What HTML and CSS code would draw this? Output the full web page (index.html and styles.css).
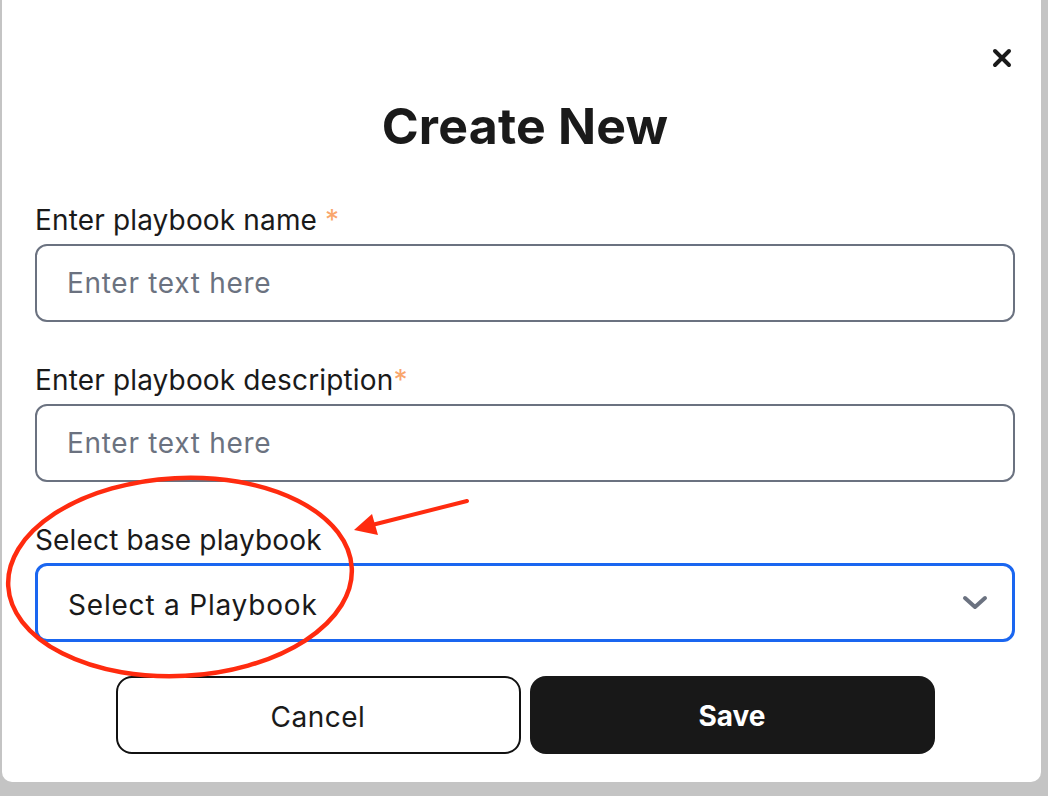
FILE: index.html
```html
<!DOCTYPE html>
<html lang="en">

<head>
    <meta charset="UTF-8">
    <meta name="viewport" content="width=device-width, initial-scale=1.0">
    <title>Create New</title>

    <link rel="stylesheet" href="styles.css">

</head>

<body>

    <div class="modal">
        <button class="fechar" aria-label="Close">
            <svg width="20" height="20" viewBox="0 0 20 20">
                <path d="M3 3 L17 17 M17 3 L3 17" stroke="#1a1a1a" stroke-width="4" stroke-linecap="round" fill="none"/>
            </svg>
        </button>

        <h2 class="titulo">Create New</h2>

        <div class="campos">
            <div class="campo">
                <label class="rotulo">Enter playbook name <span class="obrigatorio">*</span></label>
                <input class="entrada" type="text" placeholder="Enter text here">
            </div>
            <div class="campo">
                <label class="rotulo">Enter playbook description<span class="obrigatorio">*</span></label>
                <input class="entrada" type="text" placeholder="Enter text here">
            </div>
            <div class="campo">
                <label class="rotulo">Select base playbook</label>
                <div class="selecao">
                    <span>Select a Playbook</span>
                    <svg width="26" height="16" viewBox="0 0 26 16">
                        <path d="M3 3 L13 12 L23 3" stroke="#6b7280" stroke-width="4" stroke-linecap="round" stroke-linejoin="round" fill="none"/>
                    </svg>
                </div>
            </div>
        </div>

        <div class="botoes">
            <button class="btn btnCancelar">Cancel</button>
            <button class="btn btnSalvar">Save</button>
        </div>
    </div>

    <!-- marcacao vermelha por cima -->
    <svg class="marcacao" width="1048" height="796" viewBox="0 0 1048 796">
        <ellipse cx="180" cy="577" rx="172" ry="99" transform="rotate(-3 180 577)" stroke="#ff2b0f" stroke-width="4.5" fill="none"/>
        <line x1="467" y1="501" x2="372" y2="525" stroke="#ff2b0f" stroke-width="4" stroke-linecap="round"/>
        <polygon points="354,530 372,514 378,535" fill="#ff2b0f"/>
    </svg>

</body>

</html>
```

FILE: styles.css
```css
* {
    box-sizing: border-box;
}

body {
    margin: 0;
    background-color: #c4c4c4;
    font-family: "Inter", "Liberation Sans", sans-serif;
    color: #1a1a1a;
    height: 796px;
    overflow: hidden;
    position: relative;
}

.modal {
    position: relative;
    margin-left: 2px;
    width: 1039px;
    background-color: #fff;
    border-radius: 0 0 10px 10px;
    padding: 97px 26px 28px 33px;
}

.fechar {
    position: absolute;
    top: 48px;
    right: 29px;
    width: 20px;
    height: 20px;
    padding: 0;
    border: none;
    background: none;
    display: flex;
}

.titulo {
    margin: 0;
    text-align: center;
    font-size: 50px;
    line-height: 58px;
    font-weight: 700;
    letter-spacing: 0.2px;
}

.campos {
    margin-top: 48px;
    display: flex;
    flex-direction: column;
    gap: 41px;
}

.campo {
    display: flex;
    flex-direction: column;
    gap: 7px;
}

.rotulo {
    font-size: 28px;
    line-height: 34px;
    letter-spacing: 0.15px;
}

.obrigatorio {
    color: #f9a66c;
}

.entrada {
    height: 78px;
    border: 2px solid #6b7280;
    border-radius: 12px;
    padding: 0 30px;
    font-family: inherit;
    font-size: 28px;
    letter-spacing: 0.7px;
    color: #1a1a1a;
    outline: none;
}

.entrada::placeholder {
    color: #6b7280;
}

.selecao {
    height: 79px;
    margin-top: -1px;
    border: 3px solid #1a66f0;
    border-radius: 12px;
    padding: 4px 24px 0 30px;
    display: flex;
    align-items: center;
    justify-content: space-between;
    font-size: 28px;
    letter-spacing: 0.8px;
}

.selecao svg {
    margin-top: -4px;
}

.botoes {
    margin-top: 34px;
    display: flex;
    justify-content: center;
    gap: 9px;
}

.btn {
    width: 405px;
    height: 78px;
    border-radius: 16px;
    font-family: inherit;
    font-size: 28px;
}

.btnCancelar {
    background-color: #fff;
    border: 2px solid #111;
    color: #1a1a1a;
    font-weight: 400;
    letter-spacing: 0.5px;
    padding-top: 5px;
}

.btnSalvar {
    background-color: #181818;
    border: none;
    color: #fff;
    font-weight: 700;
    padding-top: 2px;
}

.marcacao {
    position: absolute;
    top: 0;
    left: 0;
    pointer-events: none;
}
```
